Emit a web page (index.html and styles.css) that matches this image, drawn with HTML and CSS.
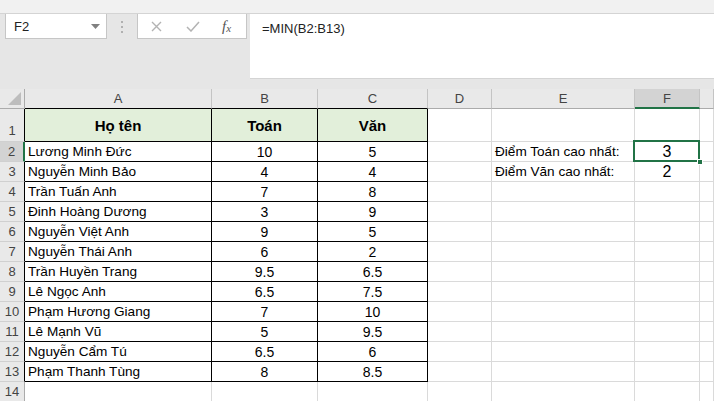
FILE: index.html
```html
<!DOCTYPE html>
<html lang="vi">
<head>
  <meta charset="UTF-8" />
  <title>Bảng điểm</title>
  <link rel="stylesheet" href="styles.css">
</head>
<body>

  <div class="topstrip"></div>

  <!-- Formula bar -->
  <div class="toolbar">
    <div class="namebox">
      <span>F2</span>
      <svg width="9" height="5" viewBox="0 0 9 5"><path d="M0 0H9L4.5 5Z" fill="#808080"/></svg>
    </div>
    <div class="grip"><i></i><i></i><i></i></div>
    <div class="fbuttons">
      <svg width="11" height="11" viewBox="0 0 11 11"><path d="M1 1L10 10M10 1L1 10" stroke="#b3b3b3" stroke-width="1.4" fill="none"/></svg>
      <svg width="14" height="11" viewBox="0 0 14 11"><path d="M1 6L5 10L13 1" stroke="#b3b3b3" stroke-width="1.5" fill="none"/></svg>
      <span class="fx">f<sub>x</sub></span>
    </div>
    <div class="formula">=MIN(B2:B13)</div>
  </div>

  <!-- Sheet -->
  <div class="sheet">
    <div class="corner"><svg width="13" height="13" viewBox="0 0 13 13"><path d="M13 0V13H0Z" fill="#bdbdbd"/></svg></div>
    <div class="ch tb">A</div>
    <div class="ch tb">B</div>
    <div class="ch tb">C</div>
    <div class="ch">D</div>
    <div class="ch">E</div>
    <div class="ch sel">F</div>
    <div class="ch"></div>

    <div class="rh tb first">1</div>
    <div class="c t h">Họ tên</div>
    <div class="c t h">Toán</div>
    <div class="c t h">Văn</div>
    <div class="c"></div><div class="c"></div><div class="c"></div><div class="c"></div>

    <div class="rh tb sel">2</div>
    <div class="c t">Lương Minh Đức</div>
    <div class="c t num">10</div>
    <div class="c t num">5</div>
    <div class="c"></div>
    <div class="c">Điểm Toán cao nhất:</div>
    <div class="c num big active">3<span class="handle"></span></div>
    <div class="c"></div>

    <div class="rh tb">3</div>
    <div class="c t">Nguyễn Minh Bảo</div>
    <div class="c t num">4</div>
    <div class="c t num">4</div>
    <div class="c"></div>
    <div class="c">Điểm Văn cao nhất:</div>
    <div class="c num big">2</div>
    <div class="c"></div>

    <div class="rh tb">4</div>
    <div class="c t">Trần Tuấn Anh</div>
    <div class="c t num">7</div>
    <div class="c t num">8</div>
    <div class="c"></div><div class="c"></div><div class="c"></div><div class="c"></div>

    <div class="rh tb">5</div>
    <div class="c t">Đinh Hoàng Dương</div>
    <div class="c t num">3</div>
    <div class="c t num">9</div>
    <div class="c"></div><div class="c"></div><div class="c"></div><div class="c"></div>

    <div class="rh tb">6</div>
    <div class="c t">Nguyễn Việt Anh</div>
    <div class="c t num">9</div>
    <div class="c t num">5</div>
    <div class="c"></div><div class="c"></div><div class="c"></div><div class="c"></div>

    <div class="rh tb">7</div>
    <div class="c t">Nguyễn Thái Anh</div>
    <div class="c t num">6</div>
    <div class="c t num">2</div>
    <div class="c"></div><div class="c"></div><div class="c"></div><div class="c"></div>

    <div class="rh tb">8</div>
    <div class="c t">Trần Huyền Trang</div>
    <div class="c t num">9.5</div>
    <div class="c t num">6.5</div>
    <div class="c"></div><div class="c"></div><div class="c"></div><div class="c"></div>

    <div class="rh tb">9</div>
    <div class="c t">Lê Ngọc Anh</div>
    <div class="c t num">6.5</div>
    <div class="c t num">7.5</div>
    <div class="c"></div><div class="c"></div><div class="c"></div><div class="c"></div>

    <div class="rh tb">10</div>
    <div class="c t">Phạm Hương Giang</div>
    <div class="c t num">7</div>
    <div class="c t num">10</div>
    <div class="c"></div><div class="c"></div><div class="c"></div><div class="c"></div>

    <div class="rh tb">11</div>
    <div class="c t">Lê Mạnh Vũ</div>
    <div class="c t num">5</div>
    <div class="c t num">9.5</div>
    <div class="c"></div><div class="c"></div><div class="c"></div><div class="c"></div>

    <div class="rh tb">12</div>
    <div class="c t">Nguyễn Cẩm Tú</div>
    <div class="c t num">6.5</div>
    <div class="c t num">6</div>
    <div class="c"></div><div class="c"></div><div class="c"></div><div class="c"></div>

    <div class="rh tb">13</div>
    <div class="c t">Phạm Thanh Tùng</div>
    <div class="c t num">8</div>
    <div class="c t num">8.5</div>
    <div class="c"></div><div class="c"></div><div class="c"></div><div class="c"></div>

    <div class="rh">14</div>
    <div class="c"></div><div class="c"></div><div class="c"></div>
    <div class="c"></div><div class="c"></div><div class="c"></div><div class="c"></div>
  </div>

</body>
</html>
```

FILE: styles.css
```css
:root {
  --chrome: #e6e6e6;
  --head: #e9e9e9;
  --head-sel: #d3d3d3;
  --grid: #dadada;
  --green: #217346;
  --fill: #e2efda;
}

* {
  box-sizing: border-box;
  margin: 0;
  padding: 0;
}

body {
  width: 714px;
  height: 401px;
  overflow: hidden;
  background: #fff;
  font-family: "Liberation Sans", Arial, sans-serif;
  color: #000;
}

.topstrip {
  height: 14px;
  background: #f1f1f1;
  border-bottom: 1px solid #d4d4d4;
}

/* Formula bar */
.toolbar {
  display: flex;
  align-items: flex-start;
  height: 75px;
  background: var(--chrome);
}

.namebox {
  display: flex;
  align-items: center;
  justify-content: space-between;
  width: 102px;
  height: 25px;
  margin-left: 5px;
  padding: 0 6px 0 8px;
  background: #fff;
  border: 1px solid #c6c6c6;
  border-top: none;
  font-size: 13px;
  color: #222;
}

.grip {
  display: flex;
  flex-direction: column;
  gap: 3px;
  margin: 7px 0 0 14px;
}

.grip i {
  display: block;
  width: 2px;
  height: 2px;
  background: #b0b0b0;
}

.fbuttons {
  display: flex;
  align-items: center;
  width: 110px;
  height: 25px;
  margin-left: 14px;
  padding-left: 13px;
  background: #fff;
  border: 1px solid #c6c6c6;
  border-top: none;
}

.fbuttons svg + svg {
  margin-left: 24px;
}

.fx {
  margin-left: 22px;
  font-family: "Liberation Serif", serif;
  font-style: italic;
  font-size: 15px;
  color: #555;
}

.fx sub {
  font-size: 11px;
  vertical-align: -1px;
}

.formula {
  flex: 1;
  height: 65px;
  margin-left: 3px;
  padding: 7px 0 0 12px;
  background: #fff;
  border-bottom: 1px solid #d4d4d4;
  font-size: 13px;
  color: #222;
}

/* Sheet grid */
.sheet {
  display: grid;
  grid-template-columns: 25px 187px 106px 110px 64px 143px 65px 1fr;
  grid-template-rows: 20px 33px repeat(13, 20px);
}

.corner {
  display: flex;
  align-items: flex-end;
  justify-content: flex-end;
  padding: 0 3px 3px 0;
  background: var(--head);
  border-right: 1px solid #ababab;
  border-bottom: 1px solid #ababab;
}

.ch {
  display: flex;
  align-items: center;
  justify-content: center;
  background: var(--head);
  border-right: 1px solid #c4c4c4;
  border-bottom: 1px solid #ababab;
  font-size: 13px;
  color: #444;
}

.ch.tb {
  border-bottom-color: #000;
}

.ch.sel {
  background: var(--head-sel);
  border-bottom: 2px solid var(--green);
}

.rh {
  display: flex;
  align-items: center;
  justify-content: center;
  background: var(--head);
  border-right: 1px solid #ababab;
  border-bottom: 1px solid #d0d0d0;
  font-size: 13px;
  color: #444;
}

.rh.tb {
  border-right-color: #000;
}

.rh.first {
  align-items: flex-end;
  padding-bottom: 3px;
}

.rh.sel {
  background: var(--head-sel);
  border-right: 2px solid var(--green);
}

.c {
  display: flex;
  align-items: center;
  padding-left: 3px;
  border-right: 1px solid var(--grid);
  border-bottom: 1px solid var(--grid);
  font-size: 13.6px;
  white-space: nowrap;
}

.c.t {
  border-color: #000;
}

.c.h {
  align-items: flex-end;
  justify-content: center;
  padding: 0 0 7px;
  background: var(--fill);
  font-size: 15px;
  font-weight: bold;
}

.c.num {
  justify-content: center;
  padding-left: 0;
  font-size: 14px;
}

.c.big {
  font-size: 16px;
}

.active {
  position: relative;
}

.active::before {
  content: "";
  position: absolute;
  top: -2px;
  left: -2px;
  right: -1px;
  bottom: -1px;
  border: 2px solid var(--green);
}

.handle {
  position: absolute;
  right: -4px;
  bottom: -4px;
  width: 6px;
  height: 6px;
  background: var(--green);
  border: 1px solid #fff;
}
```
